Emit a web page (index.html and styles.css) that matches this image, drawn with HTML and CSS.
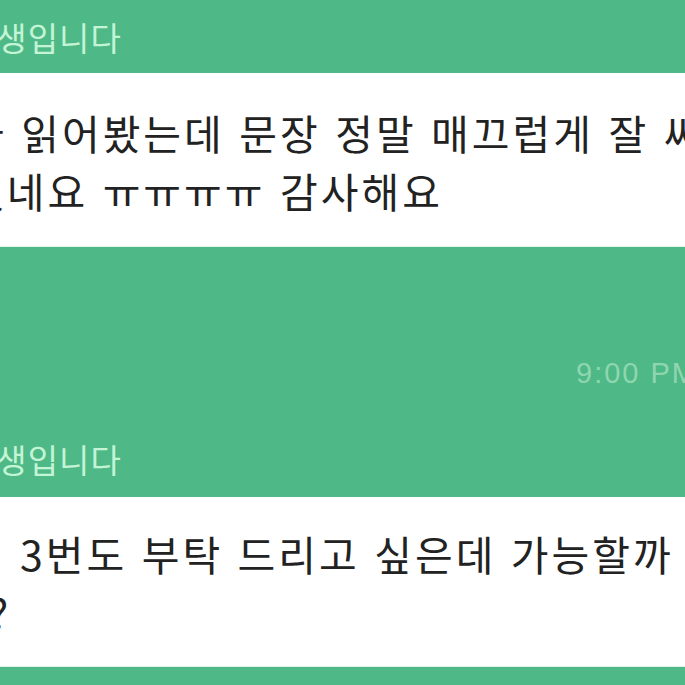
FILE: index.html
```html
<!DOCTYPE html>
<html lang="ko">
<head>
  <meta charset="UTF-8">
  <meta name="viewport" content="width=device-width, initial-scale=1.0">
  <title>채팅</title>
  <link rel="stylesheet" href="styles.css">
</head>
<body>
  <div class="chat">
    <div class="message">
      <div class="sender">학생입니다</div>
      <div class="bubble first">
        <p>다 읽어봤는데 문장 정말 매끄럽게 잘 써<br>셨네요 ㅠㅠㅠㅠ 감사해요</p>
      </div>
      <div class="time">9:00 PM</div>
    </div>
    <div class="message">
      <div class="sender">학생입니다</div>
      <div class="bubble second">
        <p>3번도 부탁 드리고 싶은데 가능할까<br>요?</p>
      </div>
    </div>
  </div>
</body>
</html>
```

FILE: styles.css
```css
body {
  margin: 0;
  padding: 0;
  background: #4eb886;
  font-family: 'Noto Sans CJK KR', 'Noto Sans', sans-serif;
  overflow: hidden;
  height: 100vh;
}
.chat {
  display: flex;
  flex-direction: column;
}
.sender {
  margin-left: -35px;
  padding-top: 19px;
  font-size: 33px;
  line-height: 36px;
  letter-spacing: 1px;
  color: #c4f4d6;
  white-space: nowrap;
  margin-bottom: 18px;
}
.message + .message .sender {
  padding-top: 50px;
  margin-bottom: 20px;
}
.bubble {
  background: #ffffff;
  border-bottom: 1px solid #dff3e8;
}
.bubble p {
  margin: 0 0 0 -34px;
  font-size: 41px;
  line-height: 58px;
  letter-spacing: 3px;
  color: #222222;
  white-space: nowrap;
}
.bubble.first {
  padding: 30px 0 27px;
}
.bubble.second {
  padding: 27px 0 26px;
}
.bubble.second p {
  margin-left: -52px;
  text-indent: 72px;
}
.time {
  margin-top: 108px;
  padding-left: 576px;
  font-family: 'Liberation Sans', Arial, sans-serif;
  font-size: 29px;
  line-height: 36px;
  letter-spacing: 2px;
  color: #8fd6b0;
  white-space: nowrap;
}
```
